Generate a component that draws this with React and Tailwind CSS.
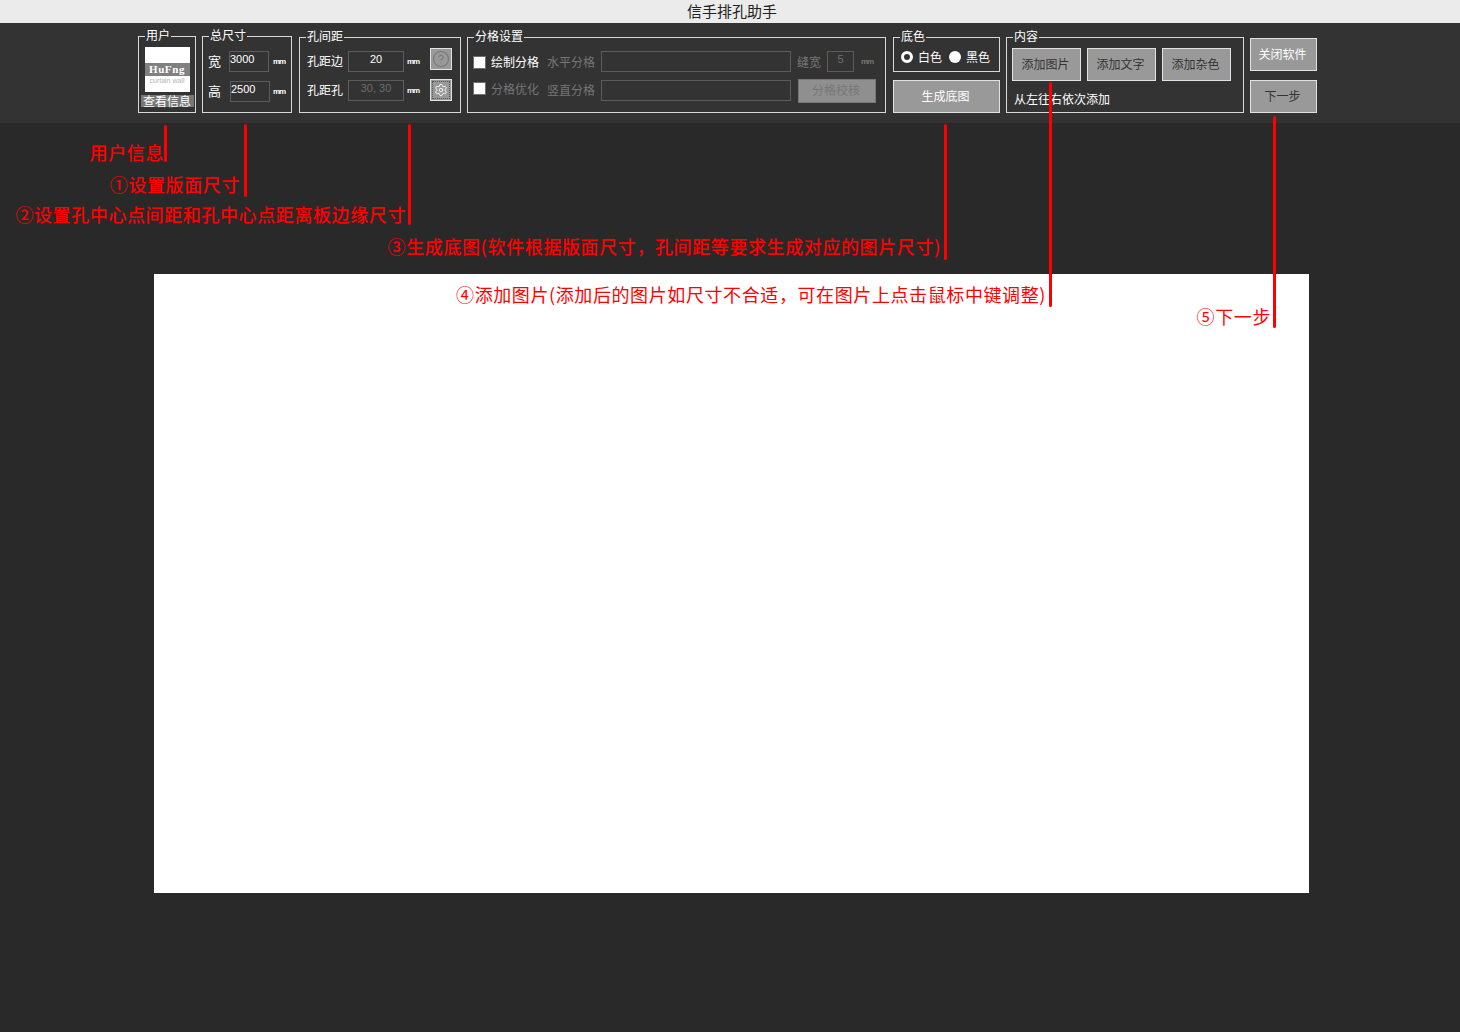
import { Settings, HelpCircle } from "lucide-react";

const font = { fontFamily: '"Noto Sans CJK SC", "Liberation Sans", sans-serif' };

// Group box with the caption sitting on its top border
const Group = ({ title, className = "", children }) => (
  <div className={`relative border border-[#d8d8d8] ${className}`}>
    <span className="absolute -top-[10px] left-[6px] bg-[#333333] px-px text-[12px] leading-[16px] text-white">
      {title}
    </span>
    {children}
  </div>
);

const Field = ({ value, className = "", dim = false }) => (
  <div
    className={`h-[21px] shrink-0 border border-[#5c5c5c] bg-[#333333] font-['Liberation_Sans'] text-[11px] leading-[15px] ${
      dim ? "text-[#6e6e6e]" : "text-white"
    } ${className}`}
  >
    {value}
  </div>
);

const Unit = ({ dim = false, className = "" }) => (
  <span
    className={`block w-[13px] font-['Liberation_Sans'] text-[8px] font-bold leading-[21px] tracking-[-1px] ${
      dim ? "text-[#777777]" : "text-white"
    } ${className}`}
  >
    mm
  </span>
);

const Check = ({ label, dim = false }) => (
  <div className="flex items-center gap-[5px]">
    <span className="h-[13px] w-[13px] border border-[#6f6f6f] bg-white" />
    <span className={`text-[12px] leading-[16px] ${dim ? "text-[#767676]" : "text-white"}`}>{label}</span>
  </div>
);

const Btn = ({ label, className = "", text = "text-[#333333]" }) => (
  <div
    className={`flex items-center justify-center border border-[#e2e2e2] bg-[#999999] pb-[2px] pr-[2px] text-[12px] ${text} ${className}`}
  >
    {label}
  </div>
);

const Logo = () => (
  <div className="flex h-[45px] w-[45px] flex-col bg-white">
    <div className="h-[16px]" />
    <div className="flex h-[13px] items-center justify-center bg-[#808080] font-['Liberation_Serif'] text-[11px] font-bold tracking-[0.6px] text-white">
      HuFng
    </div>
    <div className="whitespace-nowrap text-center font-['Liberation_Sans'] text-[7px] leading-[9px] text-[#b5b5b5]">
      curtain wall
    </div>
  </div>
);

// Red callout: vertical line plus the label ending at it
const Callout = ({ children, x, top, bottom, labelTop, right, bold = false }) => (
  <>
    <div
      className="absolute w-[3px] rounded-full bg-[#ff0000]"
      style={{ left: x, top, height: bottom - top }}
    />
    <div
      className={`absolute whitespace-nowrap text-[18px] leading-[24px] tracking-[0.6px] text-[#ff0000] ${
        bold ? "font-medium" : ""
      }`}
      style={{ right: 1460 - right, top: labelTop }}
    >
      {children}
    </div>
  </>
);

export default function App() {
  return (
    <div className="relative h-[1032px] w-[1460px] overflow-hidden bg-[#292929]" style={font}>
      {/* Title bar */}
      <div className="flex h-[23px] items-center justify-center bg-[#ebebeb] pb-px pl-[4px] text-[15px] text-[#222222]">
        信手排孔助手
      </div>

      {/* Toolbar */}
      <div className="flex h-[100px] items-start bg-[#333333] pl-[138px]">
        <Group title="用户" className="mt-[13px] flex h-[77px] w-[58px] flex-col items-center pt-[10px]">
          <Logo />
          <div className="mt-[3px] w-[53px] whitespace-nowrap bg-[#777777] text-center text-[12px] leading-[12px] text-white">
            查看信息
          </div>
        </Group>

        <Group title="总尺寸" className="ml-[6px] mt-[13px] flex h-[77px] w-[90px] flex-col gap-[9px] pl-[5px] pt-[14px]">
          <div className="flex h-[21px] items-center">
            <span className="-mt-[2px] w-[21px] text-[13px] text-white">宽</span>
            <Field value="3000" className="w-[40px]" />
            <Unit className="ml-[4px]" />
          </div>
          <div className="flex h-[21px] items-center">
            <span className="-mt-[2px] w-[22px] text-[13px] text-white">高</span>
            <Field value="2500" className="w-[40px]" />
            <Unit className="ml-[3px]" />
          </div>
        </Group>

        <Group title="孔间距" className="ml-[7px] mt-[14px] flex h-[76px] w-[162px] flex-col gap-[8px] pl-[7px] pt-[13px]">
          <div className="flex h-[21px] items-start">
            <span className="w-[41px] text-[12px] leading-[19px] text-white">孔距边</span>
            <Field value="20" className="w-[56px] text-center" />
            <Unit className="ml-[3px]" />
            <span className="-mt-[3px] ml-[10px] flex h-[22px] w-[22px] items-center justify-center border border-[#e2e2e2] bg-[#999999]">
              <HelpCircle size={18} strokeWidth={1.5} className="text-[#777777]" />
            </span>
          </div>
          <div className="flex h-[21px] items-start">
            <span className="w-[41px] text-[12px] leading-[19px] text-white">孔距孔</span>
            <Field value="30, 30" dim className="w-[56px] text-center" />
            <Unit className="ml-[3px]" />
            <span className="-mt-px ml-[10px] flex h-[22px] w-[22px] items-center justify-center border border-[#e2e2e2] bg-[#999999]">
              <span className="flex h-[18px] w-[18px] items-center justify-center border border-dotted border-[#555555]">
                <Settings size={14} strokeWidth={1.5} className="text-white" />
              </span>
            </span>
          </div>
        </Group>

        <Group title="分格设置" className="ml-[6px] mt-[14px] flex h-[76px] w-[419px] flex-col gap-[8px] pl-[5px] pt-[13px]">
          <div className="flex h-[21px] items-center">
            <div className="mt-px w-[74px]"><Check label="绘制分格" /></div>
            <span className="w-[54px] text-[12px] text-[#767676]">水平分格</span>
            <Field className="w-[190px]" />
            <span className="ml-[6px] w-[30px] text-[12px] text-[#767676]">缝宽</span>
            <Field value="5" dim className="w-[27px] text-center" />
            <Unit dim className="ml-[7px]" />
          </div>
          <div className="flex h-[21px] items-center">
            <div className="-mt-[4px] w-[74px]"><Check label="分格优化" dim /></div>
            <span className="-mt-[2px] w-[54px] text-[12px] text-[#767676]">竖直分格</span>
            <Field className="w-[190px]" />
            <Btn label="分格校核" text="text-[#777777]" className="-my-[2px] ml-[7px] h-[24px] w-[78px] !border-[#777777] !bg-[#8f8f8f]" />
          </div>
        </Group>

        <div className="ml-[7px] mt-[14px] flex w-[107px] flex-col gap-[8px]">
          <Group title="底色" className="flex h-[35px] items-center pl-[7px] pt-[5px]">
            <span className="h-[12px] w-[12px] rounded-full border-[3px] border-white bg-[#333333]" />
            <span className="ml-[5px] text-[12px] leading-[16px] text-white">白色</span>
            <span className="ml-[7px] h-[12px] w-[12px] rounded-full bg-white" />
            <span className="ml-[5px] text-[12px] leading-[16px] text-white">黑色</span>
          </Group>
          <Btn label="生成底图" text="text-white" className="h-[33px]" />
        </div>

        <Group title="内容" className="ml-[6px] mt-[14px] h-[76px] w-[238px] pl-[5px] pt-[10px]">
          <div className="flex gap-[6px]">
            <Btn label="添加图片" className="h-[33px] w-[69px]" />
            <Btn label="添加文字" className="h-[33px] w-[69px]" />
            <Btn label="添加杂色" className="h-[33px] w-[69px]" />
          </div>
          <div className="mt-[9px] pl-[2px] text-[12px] leading-[18px] text-white">从左往右依次添加</div>
        </Group>

        <div className="ml-[6px] mt-[15px] flex w-[67px] flex-col gap-[9px]">
          <Btn label="关闭软件" text="text-white" className="h-[33px]" />
          <Btn label="下一步" className="h-[33px]" />
        </div>
      </div>

      {/* Canvas */}
      <div className="ml-[154px] mt-[151px] h-[619px] w-[1155px] bg-white" />

      {/* Annotations */}
      <Callout x={164} top={125} bottom={162} labelTop={140} right={164} bold>用户信息</Callout>
      <Callout x={244} top={124} bottom={197} labelTop={172} right={240} bold>①设置版面尺寸</Callout>
      <Callout x={408} top={124} bottom={225} labelTop={202} right={406} bold>②设置孔中心点间距和孔中心点距离板边缘尺寸</Callout>
      <Callout x={944} top={124} bottom={260} labelTop={234} right={941} bold>③生成底图(软件根据版面尺寸，孔间距等要求生成对应的图片尺寸)</Callout>
      <Callout x={1049} top={82} bottom={307} labelTop={282} right={1046}>④添加图片(添加后的图片如尺寸不合适，可在图片上点击鼠标中键调整)</Callout>
      <Callout x={1273} top={116} bottom={328} labelTop={304} right={1271}>⑤下一步</Callout>
    </div>
  );
}
